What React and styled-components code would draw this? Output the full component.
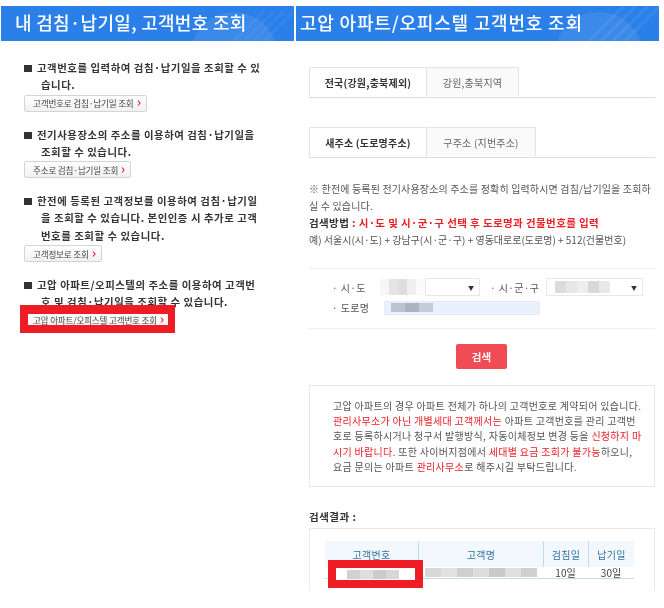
import React from 'react'
import styled, { createGlobalStyle } from 'styled-components'

const GlobalStyle = createGlobalStyle`
  html, body { margin: 0; padding: 0; background: #fff; }
  body { font-family: "Noto Sans CJK KR", "Noto Sans", sans-serif; color: #444; }
`

const Page = styled.div`
  display: flex;
  gap: 2px;
  width: 664px;
  height: 608px;
  padding: 6px 0 0 1px;
  box-sizing: border-box;
  overflow: hidden;
  filter: blur(0.35px);
`

const LeftColumn = styled.div`
  width: 293px;
  flex: none;
`

const RightColumn = styled.div`
  width: 363px;
  flex: none;
`

const Banner = styled.div`
  position: relative;
  height: 35px;
  box-sizing: border-box;
  padding: 0 0 3px ${p => p.$indent}px;
  background: #2b7fe8;
  color: #fff;
  display: flex;
  align-items: center;
  overflow: hidden;
  font-size: 18px;
  font-weight: 500;
  letter-spacing: ${p => p.$spacing}px;
  white-space: nowrap;
`

const BannerArt = styled.svg`
  position: absolute;
  top: 0;
  right: 0;
`

const Intro = styled.div`
  padding: 18px 0 0 23px;
`

const Block = styled.div`
  margin-bottom: 14px;
`

const BlockTitle = styled.p`
  margin: 0;
  padding-left: 17px;
  text-indent: -17px;
  font-size: 10.4px;
  line-height: 17.3px;
  font-weight: 700;
  color: #333;
  letter-spacing: 0.55px;
  white-space: nowrap;
`

const Square = styled.span`
  display: inline-block;
  width: 8px;
  height: 7px;
  margin-right: 5px;
  background: #333;
  text-indent: 0;
`

const LinkButton = styled.div`
  position: relative;
  display: flex;
  width: fit-content;
  align-items: center;
  gap: 3px;
  height: 15px;
  padding: 0 5px 0 8px;
  border: 1px solid #d4d4d4;
  border-radius: 2px;
  background: linear-gradient(#fff, #f1f1f1);
  font-size: 8.6px;
  letter-spacing: -0.2px;
  color: #444;
  white-space: nowrap;
  margin-top: 1px;
`

const Chevron = styled.svg`
  flex: none;
`

const RedFrame = styled.div`
  position: absolute;
  left: -5px;
  top: -8px;
  right: -6px;
  bottom: -5px;
  border: solid #ee1c25;
  border-width: 9px 7px 8px 8px;
  pointer-events: none;
`

const Content = styled.div`
  padding: 26px 4px 0 13px;
`

const Tabs = styled.div`
  display: flex;
  height: 30px;
  border-bottom: 1px solid #ddd;
  margin-bottom: ${p => p.$gap}px;
`

const Tab = styled.div`
  width: ${p => p.$width}px;
  height: ${p => (p.$active ? 30 : 29)}px;
  box-sizing: border-box;
  border: 1px solid #e2e2e2;
  border-left-width: ${p => (p.$active ? 1 : 0)}px;
  border-bottom: ${p => (p.$active ? '1px solid #fff' : 'none')};
  border-radius: 2px 2px 0 0;
  background: ${p => (p.$active ? '#fff' : '#fafafa')};
  color: ${p => (p.$active ? '#333' : '#666')};
  font-size: 10px;
  font-weight: ${p => (p.$active ? 700 : 400)};
  letter-spacing: 0.2px;
  display: flex;
  align-items: center;
  justify-content: center;
  white-space: nowrap;
`

const Guide = styled.div`
  font-size: 10px;
  line-height: 17px;
  color: #555;
  padding-top: 22px;
  white-space: nowrap;
`

const GuideLead = styled.div`
  letter-spacing: 0.15px;
`

const Emphasis = styled.div`
  color: #ee1c25;
  font-size: 10.5px;
  font-weight: 700;
  letter-spacing: 0.4px;
`

const EmphasisLabel = styled.span`
  color: #333;
`

const SearchForm = styled.div`
  margin-top: 20px;
  padding: 10px 0 13px 23px;
  border-top: 1px solid #eee;
  border-bottom: 1px solid #eee;
  display: flex;
  flex-direction: column;
  gap: 5px;
`

const FormRow = styled.div`
  display: flex;
  align-items: center;
  height: ${p => p.$height}px;
`

const FieldLabel = styled.div`
  width: ${p => p.$width}px;
  flex: none;
  font-size: 10px;
  color: #555;
  letter-spacing: 0.4px;
  white-space: nowrap;
`

const Select = styled.div`
  width: ${p => p.$width}px;
  height: 16px;
  border: 1px solid #e8e8e8;
  position: relative;
  display: flex;
  align-items: center;
  justify-content: flex-end;
  padding-right: 5px;
  font-size: 6px;
  color: #333;
  margin-right: ${p => p.$after || 0}px;
`

const RoadInput = styled.div`
  width: 148px;
  height: 12px;
  background: #e8f0fe;
  border: 1px solid #e6ecf5;
  display: flex;
  align-items: center;
  padding-left: 6px;
`

const Mosaic = styled.div`
  display: flex;
  flex: none;
  position: ${p => (p.$over ? 'absolute' : 'static')};
  left: ${p => p.$left || 0}px;
  top: ${p => p.$top || 0}px;
`

const MosaicCell = styled.span`
  display: block;
  width: ${p => p.$width}px;
  height: ${p => p.$height}px;
  background: ${p => p.$color};
`

const SubmitRow = styled.div`
  display: flex;
  justify-content: center;
  padding: 15px 0 16px;
`

const SubmitButton = styled.div`
  width: 51px;
  height: 25px;
  border-radius: 2px;
  background: #f14b55;
  color: #fff;
  font-size: 10.5px;
  font-weight: 700;
  display: flex;
  align-items: center;
  justify-content: center;
  margin-left: -1px;
`

const Notice = styled.div`
  border: 1px solid #e6e6e6;
  padding: 12px 12px 12px 23px;
  font-size: 10px;
  line-height: 15.2px;
  color: #555;
  letter-spacing: 0.3px;
  white-space: nowrap;
`

const Hot = styled.span`
  color: #ee1c25;
`

const ResultTitle = styled.div`
  margin-top: 22px;
  font-size: 10.5px;
  font-weight: 700;
  color: #333;
  letter-spacing: 0.5px;
`

const ResultBox = styled.div`
  position: relative;
  margin-top: 4px;
  height: 49px;
  border: 1px solid #e9e9e9;
  border-bottom: none;
  padding: 12px 0 0 15px;
`

const ResultGrid = styled.div`
  display: grid;
  grid-template-columns: 93px 125px 45px 46px;
  width: 309px;
  border-bottom: 1px solid #c6dbea;
`

const HeadCell = styled.div`
  height: 26px;
  background: #f2f8fe;
  border-left: ${p => (p.$first ? 'none' : '1px solid #c6dbea')};
  color: #33719f;
  font-size: 10px;
  display: flex;
  align-items: center;
  justify-content: center;
  letter-spacing: 0.3px;
`

const BodyCell = styled.div`
  height: 11px;
  font-size: 10px;
  color: #444;
  display: flex;
  align-items: center;
  justify-content: center;
  background: #fff;
`

const HighlightBox = styled.div`
  position: absolute;
  left: 18px;
  top: 31px;
  width: 95px;
  height: 28px;
  box-sizing: border-box;
  border: 8px solid #ee1c25;
  background: #fff;
  display: flex;
  align-items: center;
  padding-left: 11px;
`

const tiles = (colors, width, height) =>
  colors.map((color, i) => <MosaicCell key={i} $width={width} $height={height} $color={color} />)

const blocks = [
  {
    lines: ['고객번호를 입력하여 검침·납기일을 조회할 수 있', '습니다.'],
    button: '고객번호로 검침·납기일 조회',
  },
  {
    lines: ['전기사용장소의 주소를 이용하여 검침·납기일을', '조회할 수 있습니다.'],
    button: '주소로 검침·납기일 조회',
  },
  {
    lines: ['한전에 등록된 고객정보를 이용하여 검침·납기일', '을 조회할 수 있습니다. 본인인증 시 추가로 고객', '번호를 조회할 수 있습니다.'],
    button: '고객정보로 조회',
  },
  {
    lines: ['고압 아파트/오피스텔의 주소를 이용하여 고객번', '호 및 검침·납기일을 조회할 수 있습니다.'],
    button: '고압 아파트/오피스텔 고객번호 조회',
    marked: true,
  },
]

export default function App() {
  return (
    <Page>
      <GlobalStyle />
      <LeftColumn>
        <Banner $indent={14} $spacing={0.3}>
          내 검침·납기일, 고객번호 조회
          <BannerArt width="120" height="35" viewBox="0 0 120 35">
            <circle cx="60" cy="50" r="44" fill="#fff" opacity="0.08" />
            <path d="M60 35L90 5M70 35L100 5M80 35L110 5M90 35L120 5" stroke="#fff" strokeWidth="3" opacity="0.05" />
          </BannerArt>
        </Banner>
        <Intro>
          {blocks.map(block => (
            <Block key={block.button}>
              <BlockTitle>
                <Square />
                {block.lines.map((line, i) => (
                  <React.Fragment key={line}>
                    {i > 0 && <br />}
                    {line}
                  </React.Fragment>
                ))}
              </BlockTitle>
              <LinkButton>
                {block.button}
                <Chevron width="4" height="6" viewBox="0 0 4 6">
                  <path d="M1 .5L3 3L1 5.5" fill="none" stroke="#e8262c" strokeWidth="1.2" />
                </Chevron>
                {block.marked && <RedFrame />}
              </LinkButton>
            </Block>
          ))}
        </Intro>
      </LeftColumn>

      <RightColumn>
        <Banner $indent={4} $spacing={0.8}>
          고압 아파트/오피스텔 고객번호 조회
          <BannerArt width="120" height="35" viewBox="0 0 120 35">
            <circle cx="60" cy="50" r="44" fill="#fff" opacity="0.08" />
            <path d="M50 35L85 0M62 35L97 0M74 35L109 0M86 35L121 0" stroke="#fff" strokeWidth="3" opacity="0.07" />
          </BannerArt>
        </Banner>
        <Content>
          <Tabs $gap={29}>
            <Tab $active $width={118}>전국(강원,충북제외)</Tab>
            <Tab $width={92}>강원,충북지역</Tab>
          </Tabs>
          <Tabs $gap={0}>
            <Tab $active $width={118}>새주소 (도로명주소)</Tab>
            <Tab $width={109}>구주소 (지번주소)</Tab>
          </Tabs>
          <Guide>
            <GuideLead>
              ※ 한전에 등록된 전기사용장소의 주소를 정확히 입력하시면 검침/납기일을 조회하<br />
              실 수 있습니다.
            </GuideLead>
            <Emphasis><EmphasisLabel>검색방법 </EmphasisLabel>: 시·도 및 시·군·구 선택 후 도로명과 건물번호를 입력</Emphasis>
            예) 서울시(시·도) + 강남구(시·군·구) + 영동대로로(도로명) + 512(건물번호)
          </Guide>
          <SearchForm>
            <FormRow $height={16}>
              <FieldLabel $width={48}>· 시·도</FieldLabel>
              <Mosaic>
                {tiles(['#f6f6f6', '#e4e4e4', '#dedede', '#efefef', '#fafafa'], 9, 16)}
              </Mosaic>
              <Select $width={48} $after={10}>▼</Select>
              <FieldLabel $width={56}>· 시·군·구</FieldLabel>
              <Select $width={90}>
                <Mosaic $over $left={8} $top={2}>
                  {tiles(['#dcdcdc', '#e6e6e6', '#eeeeee', '#d8d8d8', '#e8e8e8'], 11, 12)}
                </Mosaic>
                ▼
              </Select>
            </FormRow>
            <FormRow $height={15}>
              <FieldLabel $width={52}>· 도로명</FieldLabel>
              <RoadInput>
                <Mosaic>
                  {tiles(['#bcc4d2', '#aeb3bf', '#c4ccd8'], 14, 9)}
                </Mosaic>
              </RoadInput>
            </FormRow>
          </SearchForm>
          <SubmitRow>
            <SubmitButton>검색</SubmitButton>
          </SubmitRow>
          <Notice>
            고압 아파트의 경우 아파트 전체가 하나의 고객번호로 계약되어 있습니다.<br />
            <Hot>관리사무소가 아닌 개별세대 고객께서는</Hot> 아파트 고객번호를 관리 고객번<br />
            호로 등록하시거나 청구서 발행방식, 자동이체정보 변경 등을 <Hot>신청하지 마</Hot><br />
            <Hot>시기 바랍니다.</Hot> 또한 사이버지점에서 <Hot>세대별 요금 조회가 불가능</Hot>하오니,<br />
            요금 문의는 아파트 <Hot>관리사무소</Hot>로 해주시길 부탁드립니다.
          </Notice>
          <ResultTitle>검색결과 :</ResultTitle>
          <ResultBox>
            <ResultGrid>
              <HeadCell $first>고객번호</HeadCell>
              <HeadCell>고객명</HeadCell>
              <HeadCell>검침일</HeadCell>
              <HeadCell>납기일</HeadCell>
              <BodyCell />
              <BodyCell>
                <Mosaic>
                  {tiles(['#d8d8d8', '#e2e2e2', '#cfcfcf', '#dddddd', '#c9c9c9', '#e0e0e0', '#d0d0d0'], 16, 9)}
                </Mosaic>
              </BodyCell>
              <BodyCell>10일</BodyCell>
              <BodyCell>30일</BodyCell>
            </ResultGrid>
            <HighlightBox>
              <Mosaic>
                {tiles(['#d2d2d2', '#dedede', '#cccccc', '#d8d8d8'], 13, 9)}
              </Mosaic>
            </HighlightBox>
          </ResultBox>
        </Content>
      </RightColumn>
    </Page>
  )
}
